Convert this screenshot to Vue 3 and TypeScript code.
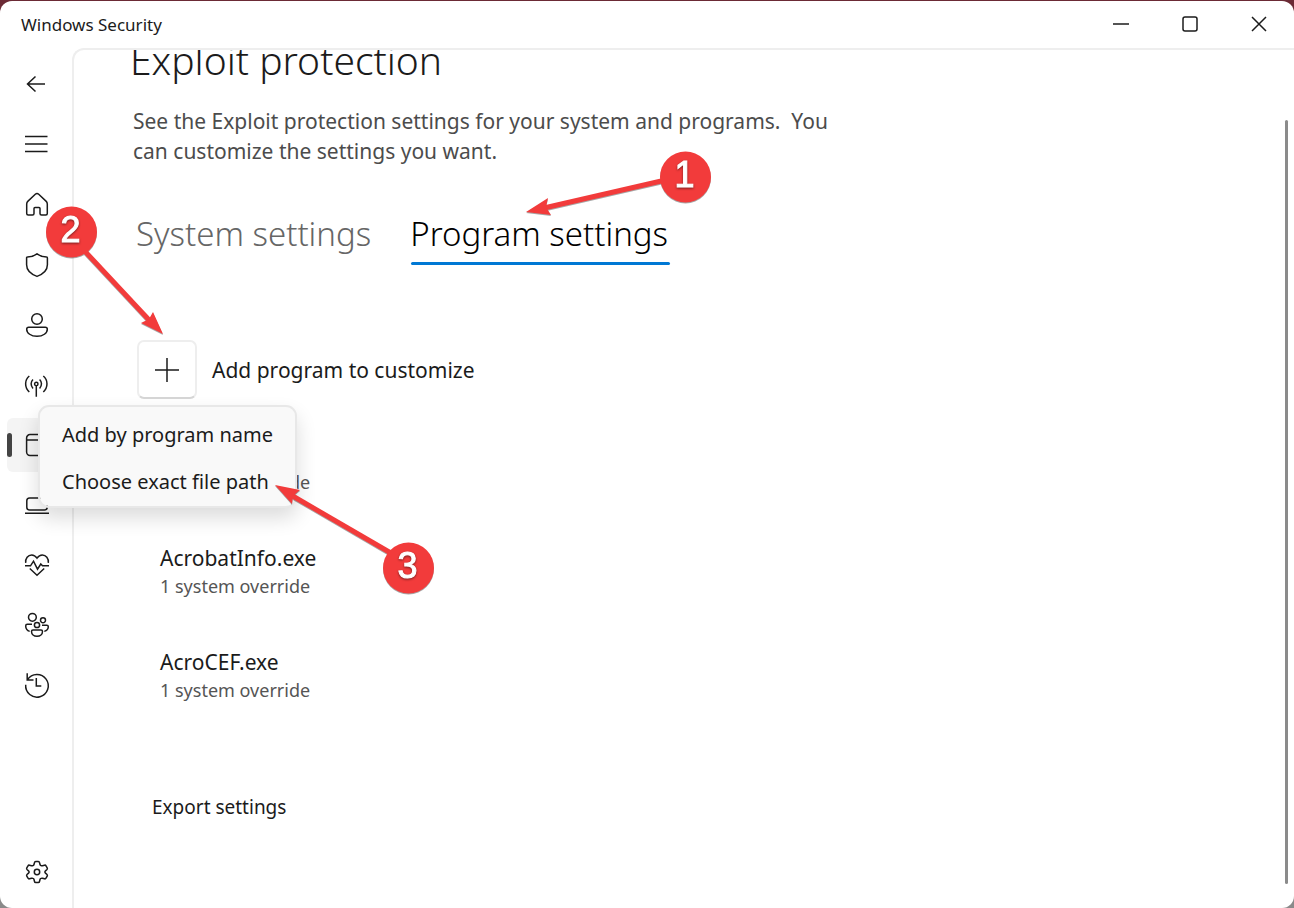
<script setup lang="ts">
interface NavItem {
  id: string
  label: string
  paths: string[]
  active?: boolean
}

interface Program {
  name: string
  detail: string
}

interface Callout {
  step: number
  cx: number
  cy: number
  from: [number, number]
  to: [number, number]
  head: string
}

const navItems: NavItem[] = [
  { id: 'back', label: 'Back', paths: ['M20 11H2.500M10.500 3.500 2.500 11l8 7.500'] },
  { id: 'menu', label: 'Open navigation', paths: ['M0 3.500h22.500M0 11h22.500M0 18.500h22.500'] },
  {
    id: 'home',
    label: 'Home',
    paths: ['M10.300 1.300a2.500 2.500 0 0 1 3.400 0l7.300 6.800a4 4 0 0 1 1.300 2.900V20.500a1.500 1.500 0 0 1-1.500 1.500h-4.300A1.500 1.500 0 0 1 15 20.500V15.500a1 1 0 0 0-1-1h-4a1 1 0 0 0-1 1V20.500a1.500 1.500 0 0 1-1.500 1.500H3.200A1.500 1.500 0 0 1 1.700 20.500V11A4 4 0 0 1 3 8.100z'],
  },
  {
    id: 'virus',
    label: 'Virus & threat protection',
    paths: ['M12 .8C9 3 5.500 4 2.300 4.100q-.7 0-.7.900v6.800c0 5.200 3.900 9.200 10.400 11.600 6.500-2.400 10.400-6.400 10.400-11.600V5q0-.9-.7-.9C18.500 4 15 3 12 .8z'],
  },
  {
    id: 'account',
    label: 'Account protection',
    paths: [
      'M17.300 6a5.300 5.300 0 1 1-10.600 0 5.300 5.300 0 0 1 10.600 0z',
      'M3.700 14.200h16.600q2 0 2 2c0 4-4.300 7.100-10.300 7.100S1.700 20.200 1.700 16.200q0-2 2-2z',
    ],
  },
  {
    id: 'firewall',
    label: 'Firewall & network protection',
    paths: [
      'M13 11a1.700 1.700 0 1 1-3.400 0 1.700 1.700 0 0 1 3.400 0zM11.300 12.800v11',
      'M8 6.500c-2.500 2.300-2.500 6.300 0 9M14.600 6.500c2.500 2.300 2.500 6.300 0 9',
      'M4.300 3C-.6 7 -.6 14.500 4.300 19M18.300 3c4.900 4 4.900 11.500 0 16',
    ],
  },
  {
    id: 'browser',
    label: 'App & browser control',
    active: true,
    paths: ['M5 1.600h14a3.400 3.400 0 0 1 3.400 3.400v14a3.400 3.400 0 0 1-3.400 3.400H5A3.400 3.400 0 0 1 1.600 19V5A3.400 3.400 0 0 1 5 1.600zM1.600 7h20.800'],
  },
  {
    id: 'device',
    label: 'Device security',
    paths: ['M4.600 5h14.800q2.800 0 2.800 2.800v6.400q0 2.800-2.800 2.800H4.600q-2.800 0-2.800-2.800V7.800Q1.800 5 4.600 5zM0 20.200h24'],
  },
  {
    id: 'health',
    label: 'Device performance & health',
    paths: [
      'M.7 9.800C.2 5.500 3 2 6.700 2c2.200 0 3.800 1 5.300 3.200C13.500 3 15.100 2 17.300 2c3.700 0 6.500 3.500 6 7.800',
      'M0 12.800h5.500l3-4.600 4 8 3.300-5.200 1.700 1.800H24',
      'M4.800 15.500 12 22.300l7.200-6.800',
    ],
  },
  {
    id: 'family',
    label: 'Family options',
    paths: [
      'M11.300 4.300a3.900 3.900 0 1 1-7.800 0 3.900 3.900 0 0 1 7.800 0z',
      'M20.500 7.300a2.500 2.500 0 1 1-5 0 2.500 2.500 0 0 1 5 0z',
      'M14.600 12a2.600 2.600 0 1 1-5.200 0 2.600 2.600 0 0 1 5.200 0z',
      'M7 11.300H2.300Q.7 11.300.7 13c0 2.600 1.600 4.600 4 5.400M17 12.300h4.800q1.500 0 1.500 1.500c0 2.300-1.500 3.900-4 4.600',
      'M8 17h8q1.500 0 1.500 1.500c0 2.700-2.300 4.700-5.500 4.700s-5.500-2-5.500-4.700Q6.500 17 8 17z',
    ],
  },
  {
    id: 'history',
    label: 'Protection history',
    paths: ['M2.200 .3v6.700h6.300M2.500 6.600A11.300 11.300 0 1 1 .7 11.800M11.300 5v8h5'],
  },
]

const gear: NavItem = {
  id: 'settings',
  label: 'Settings',
  paths: [
    'M10.700 1.500h2.600q1 0 1.200 1l.5 2q.2.800 1 1.100.8.400 1.500.2l2-.6q1-.3 1.500.6l1.200 2.100q.5.900-.2 1.600l-1.500 1.400q-.6.500-.6 1.100 0 .6.600 1.100l1.500 1.400q.7.700.2 1.600L21 18.200q-.5.900-1.500.6l-2-.6q-.7-.2-1.500.2-.8.300-1 1.100l-.5 2q-.2 1-1.200 1h-2.600q-1 0-1.200-1l-.5-2q-.2-.8-1-1.100-.8-.4-1.500-.2l-2 .6q-1 .3-1.500-.6l-1.200-2.100q-.5-.9.200-1.600l1.500-1.400q.6-.5.600-1.100 0-.6-.6-1.100L2 9.500q-.7-.7-.2-1.600L3 5.800q.5-.9 1.500-.6l2 .6q.7.200 1.500-.2.800-.3 1-1.100l.5-2q.2-1 1.200-1z',
    'M14.700 12a2.700 2.700 0 1 1-5.400 0 2.700 2.700 0 0 1 5.400 0z',
  ],
}

const programs: Program[] = [
  { name: '', detail: '1 system override' },
  { name: 'AcrobatInfo.exe', detail: '1 system override' },
  { name: 'AcroCEF.exe', detail: '1 system override' },
]

const menuItems: string[] = ['Add by program name', 'Choose exact file path']

const callouts: Callout[] = [
  { step: 1, cx: 685.5, cy: 177, from: [670, 179], to: [544, 208], head: '526,212 548,198 546,207 551,215' },
  { step: 2, cx: 71.5, cy: 232, from: [80, 246], to: [150, 321], head: '163,334 153,312 149,319 141,323' },
  { step: 3, cx: 408.5, cy: 568, from: [396, 556], to: [291, 495], head: '275,485 300,490 293,496 292,504' },
]
</script>

<template>
  <div class="desktop">
    <div class="window">
      <header class="titlebar">
        <span class="caption">Windows Security</span>
        <div class="controls">
          <button type="button" aria-label="Minimize">
            <svg viewBox="0 0 16 16"><path d="M0 8h16" /></svg>
          </button>
          <button type="button" aria-label="Maximize">
            <svg viewBox="0 0 16 16"><rect x="1" y="1" width="14" height="14" rx="2" /></svg>
          </button>
          <button type="button" aria-label="Close">
            <svg viewBox="0 0 16 16"><path d="M1 1l14 14M15 1 1 15" /></svg>
          </button>
        </div>
      </header>

      <div class="body">
        <nav class="sidebar">
          <button
            v-for="item in navItems"
            :key="item.id"
            type="button"
            class="nav-item"
            :class="{ active: item.active }"
            :aria-label="item.label"
          >
            <svg viewBox="0 0 24 24">
              <path v-for="d in item.paths" :key="d" :d="d" />
            </svg>
          </button>
          <button type="button" class="nav-item last" :aria-label="gear.label">
            <svg viewBox="0 0 24 24">
              <path v-for="d in gear.paths" :key="d" :d="d" />
            </svg>
          </button>
        </nav>

        <main class="pane">
          <div class="content">
            <h1>Exploit protection</h1>
            <p class="intro">
              See the Exploit protection settings for your system and programs.&nbsp; You can customize the settings you want.
            </p>

            <div class="tabs" role="tablist">
              <button type="button" role="tab" aria-selected="false" class="tab">System settings</button>
              <button type="button" role="tab" aria-selected="true" class="tab selected">Program settings</button>
            </div>

            <div class="add-row">
              <button id="add-program" type="button" class="add">
                <svg viewBox="0 0 24 24"><path d="M12 0v24M0 12h24" /></svg>
              </button>
              <label for="add-program">Add program to customize</label>
            </div>

            <ul class="programs">
              <li v-for="(program, i) in programs" :key="i">
                <div class="name">{{ program.name }}</div>
                <div class="detail">{{ program.detail }}</div>
              </li>
            </ul>

            <a class="export" href="#">Export settings</a>
          </div>
          <div class="scrollbar"></div>
        </main>
      </div>

      <div class="menu" role="menu">
        <button v-for="entry in menuItems" :key="entry" type="button" role="menuitem">{{ entry }}</button>
      </div>
    </div>

    <svg class="callouts" width="1" height="1">
      <g v-for="c in callouts" :key="c.step">
        <line :x1="c.from[0]" :y1="c.from[1]" :x2="c.to[0]" :y2="c.to[1]" />
        <polygon :points="c.head" />
        <circle :cx="c.cx" :cy="c.cy" r="25.500" />
        <text :x="c.cx - 1" :y="c.cy + 10">{{ c.step }}</text>
      </g>
    </svg>
  </div>
</template>

<style>
body {
  margin: 0;
}
</style>

<style scoped>
* {
  box-sizing: border-box;
}

.desktop {
  position: relative;
  height: 100vh;
  padding-top: 1px;
  overflow: hidden;
  background: linear-gradient(#6b2a35 50%, #8a8a8a 50%);
  font-family: "Noto Sans", "Open Sans", sans-serif;
  color: #1b1b1b;
}

.window {
  display: flex;
  flex-direction: column;
  height: 100%;
  border-radius: 12px;
  overflow: hidden;
  background: #fff;
}

button {
  margin: 0;
  padding: 0;
  border: 0;
  background: none;
  color: inherit;
  font: inherit;
}

svg {
  fill: none;
  stroke: #1b1b1b;
  overflow: visible;
}

.titlebar {
  display: flex;
  flex: none;
  height: 47px;
  justify-content: space-between;
  align-items: center;
  padding: 0 1px 0 21px;
}

.caption {
  font-size: 17px;
}

.controls {
  display: flex;
  align-self: flex-start;
}

.controls button {
  display: grid;
  place-items: center;
  width: 69px;
  height: 46px;
}

.controls svg {
  width: 16px;
  height: 16px;
  stroke-width: 1.5;
}

.body {
  display: flex;
  flex: 1;
  min-height: 0;
}

.sidebar {
  display: flex;
  flex: none;
  flex-direction: column;
  width: 72px;
  padding: 7px 0 6px 7px;
}

.nav-item {
  display: flex;
  flex: none;
  align-items: center;
  height: 54px;
  margin: 3px 0;
  padding-left: 18px;
  border-radius: 6px;
}

.nav-item svg {
  width: 24px;
  height: 24px;
  stroke-width: 1.5;
}

.nav-item.active {
  padding-left: 0;
  background: #f4f4f4;
}

.nav-item.active::before {
  content: "";
  width: 5px;
  height: 24px;
  margin-right: 13px;
  border-radius: 3px;
  background: #444;
}

.nav-item.last {
  margin-top: auto;
}

.pane {
  display: flex;
  flex: 1;
  justify-content: space-between;
  min-width: 0;
  border-top: 2px solid #eee;
  border-left: 2px solid #eee;
  border-top-left-radius: 12px;
  overflow: hidden;
}

.content {
  width: 780px;
  padding-left: 59px;
}

h1 {
  margin: -18px 0 18px -3px;
  font-size: 39px;
  font-weight: 300;
  line-height: 56px;
}

.intro {
  max-width: 710px;
  margin: 0;
  font-size: 21px;
  line-height: 30px;
  color: #4c4c4c;
}

.tabs {
  display: flex;
  gap: 39px;
  margin-top: 43px;
  padding-left: 3px;
}

.tab {
  position: relative;
  height: 56px;
  padding-bottom: 6px;
  font-size: 33px;
  font-weight: 300;
  line-height: 50px;
  color: #666;
}

.tab.selected {
  color: #000;
}

.tab.selected::after {
  content: "";
  position: absolute;
  right: -2px;
  bottom: 0;
  left: 1px;
  height: 3px;
  border-radius: 2px;
  background: #0078d4;
}

.add-row {
  display: flex;
  align-items: center;
  gap: 15px;
  margin-top: 75px;
  padding-left: 4px;
  font-size: 21px;
}

.add {
  display: grid;
  place-items: center;
  width: 60px;
  height: 59px;
  border: 2px solid #eee;
  border-bottom-color: #d6d6d6;
  border-radius: 7px;
}

.add svg {
  width: 24px;
  height: 24px;
  stroke-width: 1.5;
}

.programs {
  display: flex;
  flex-direction: column;
  gap: 48px;
  margin: 41px 0 89px;
  padding: 0 0 0 27px;
  list-style: none;
}

.name {
  height: 28px;
  font-size: 21px;
  line-height: 28px;
}

.detail {
  font-size: 18px;
  line-height: 28px;
  color: #555;
}

.export {
  margin-left: 19px;
  font-size: 19px;
  line-height: 28px;
  color: inherit;
  text-decoration: none;
}

.scrollbar {
  width: 3px;
  margin: 70px 6px 24px 0;
  border-radius: 2px;
  background: #8b8b8b;
}

.menu {
  position: absolute;
  top: 405px;
  left: 38px;
  display: flex;
  flex-direction: column;
  gap: 1px;
  width: 259px;
  padding: 4px 3px 2px;
  border: 2px solid #e8e8e8;
  border-radius: 11px;
  background: #f9f9f9;
  background-clip: padding-box;
  box-shadow: 0 10px 20px rgba(0, 0, 0, 0.14);
}

.menu button {
  height: 46px;
  padding-left: 19px;
  font-size: 20px;
  text-align: left;
  white-space: nowrap;
}

.callouts {
  position: absolute;
  top: 0;
  left: 0;
  pointer-events: none;
}

.callouts g {
  filter: drop-shadow(0 1px 0 rgba(0, 0, 0, 0.35));
}

.callouts line {
  stroke: #f23b3b;
  stroke-width: 5;
}

.callouts polygon,
.callouts circle {
  fill: #f23b3b;
  stroke: none;
}

.callouts text {
  fill: #fff;
  stroke: #fff;
  stroke-width: 1;
  font-family: "Liberation Sans", Arial, sans-serif;
  font-size: 36px;
  text-anchor: middle;
  filter: drop-shadow(0 1px 1px rgba(0, 0, 0, 0.5));
}
</style>
